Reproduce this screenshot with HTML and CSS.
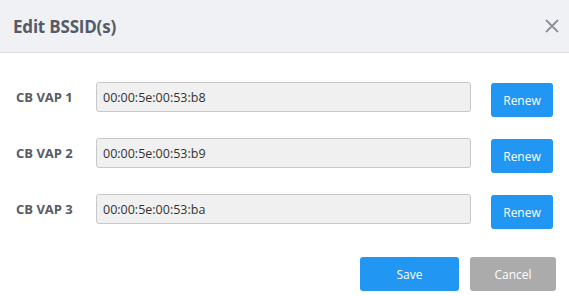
FILE: index.html
```html
<!DOCTYPE html>
<html>
<head>
    <meta charset="UTF-8">
    <title>Edit BSSID(s)</title>
    <link rel="stylesheet" href="styles.css">
</head>
<body>
    <div class="dialog">
        <div class="dialog-header">
            <h1 class="dialog-title">Edit BSSID(s)</h1>
            <button class="close-btn" aria-label="Close">
                <svg viewBox="0 0 14 14" width="14" height="14">
                    <path d="M1 1 L13 13 M13 1 L1 13" stroke="currentColor" stroke-width="1.8" fill="none"/>
                </svg>
            </button>
        </div>

        <div class="dialog-body">
            <div class="bssid-row">
                <label class="bssid-label">CB VAP 1</label>
                <input class="bssid-input" type="text" value="00:00:5e:00:53:b8">
                <button class="btn btn-primary btn-renew">Renew</button>
            </div>
            <div class="bssid-row">
                <label class="bssid-label">CB VAP 2</label>
                <input class="bssid-input" type="text" value="00:00:5e:00:53:b9">
                <button class="btn btn-primary btn-renew">Renew</button>
            </div>
            <div class="bssid-row">
                <label class="bssid-label">CB VAP 3</label>
                <input class="bssid-input" type="text" value="00:00:5e:00:53:ba">
                <button class="btn btn-primary btn-renew">Renew</button>
            </div>
        </div>

        <div class="dialog-footer">
            <button class="btn btn-primary btn-save">Save</button>
            <button class="btn btn-muted btn-cancel">Cancel</button>
        </div>
    </div>
</body>
</html>
```

FILE: styles.css
```css
* {
    margin: 0;
    padding: 0;
    box-sizing: border-box;
}

body {
    font-family: 'Open Sans', 'Noto Sans', sans-serif;
    width: 569px;
    height: 296px;
    overflow: hidden;
    background: #ffffff;
    color: #333333;
}

.dialog {
    width: 569px;
    height: 296px;
    display: flex;
    flex-direction: column;
}

/* Header */
.dialog-header {
    height: 53px;
    background: #f0f1f5;
    border-bottom: 1px solid #dcdde2;
    display: flex;
    align-items: center;
    justify-content: space-between;
    padding: 0 10px 0 13px;
}

.dialog-title {
    font-size: 17px;
    font-weight: 700;
    color: #555a66;
    letter-spacing: -0.2px;
}

.close-btn {
    border: none;
    background: none;
    color: #8c919b;
    width: 14px;
    height: 14px;
    display: flex;
    cursor: pointer;
    margin-right: 0;
}

/* Rows */
.dialog-body {
    padding: 29px 16px 0 16px;
    display: flex;
    flex-direction: column;
    gap: 21px;
}

.bssid-row {
    display: flex;
    align-items: flex-start;
}

.bssid-label {
    width: 80px;
    height: 30px;
    line-height: 30px;
    font-size: 13px;
    font-weight: 700;
    color: #555a66;
}

.bssid-input {
    width: 375px;
    height: 30px;
    border: 1px solid #c8c8c8;
    border-radius: 3px;
    background: #f0f0f0;
    padding: 0 6px;
    font-family: inherit;
    font-size: 12.5px;
    color: #333333;
}

/* Buttons */
.btn {
    border: none;
    border-radius: 3px;
    height: 34px;
    font-family: inherit;
    font-size: 12px;
    color: #ffffff;
    cursor: pointer;
}

.btn-primary {
    background: #2196f3;
}

.btn-muted {
    background: #ababab;
}

.btn-renew {
    width: 62px;
    margin-left: 20px;
    margin-top: 1px;
}

.dialog-footer {
    display: flex;
    justify-content: flex-end;
    gap: 11px;
    padding: 28px 13px 0 0;
}

.btn-save {
    width: 99px;
}

.btn-cancel {
    width: 86px;
}
```
